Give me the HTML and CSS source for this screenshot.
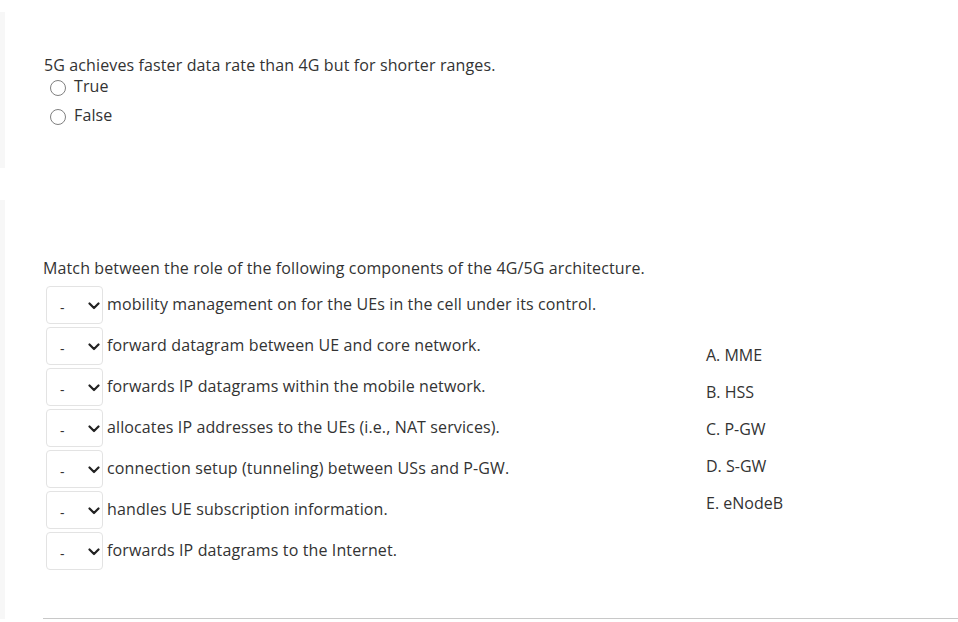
FILE: index.html
```html
<!DOCTYPE html>
<html lang="en">
<head>
<meta charset="utf-8">
<title>Quiz</title>
<link rel="stylesheet" href="styles.css">
</head>
<body>
<div class="page">
  <section class="card card-tf">
    <p class="question">5G achieves faster data rate than 4G but for shorter ranges.</p>
    <label class="option"><span class="radio"></span><span class="opt-text">True</span></label>
    <label class="option"><span class="radio"></span><span class="opt-text">False</span></label>
  </section>

  <section class="card card-match">
    <p class="question">Match between the role of the following components of the 4G/5G architecture.</p>
    <div class="match">
      <div class="rows">
        <div class="row"><div class="select"><span class="dash">-</span><svg class="chev" viewBox="0 0 12 8"><path d="M1.5 1.5 L6 6 L10.5 1.5" /></svg></div><span class="row-text">mobility management on for the UEs in the cell under its control.</span></div>
        <div class="row"><div class="select"><span class="dash">-</span><svg class="chev" viewBox="0 0 12 8"><path d="M1.5 1.5 L6 6 L10.5 1.5" /></svg></div><span class="row-text">forward datagram between UE and core network.</span></div>
        <div class="row"><div class="select"><span class="dash">-</span><svg class="chev" viewBox="0 0 12 8"><path d="M1.5 1.5 L6 6 L10.5 1.5" /></svg></div><span class="row-text">forwards IP datagrams within the mobile network.</span></div>
        <div class="row"><div class="select"><span class="dash">-</span><svg class="chev" viewBox="0 0 12 8"><path d="M1.5 1.5 L6 6 L10.5 1.5" /></svg></div><span class="row-text">allocates IP addresses to the UEs (i.e., NAT services).</span></div>
        <div class="row"><div class="select"><span class="dash">-</span><svg class="chev" viewBox="0 0 12 8"><path d="M1.5 1.5 L6 6 L10.5 1.5" /></svg></div><span class="row-text">connection setup (tunneling) between USs and P-GW.</span></div>
        <div class="row"><div class="select"><span class="dash">-</span><svg class="chev" viewBox="0 0 12 8"><path d="M1.5 1.5 L6 6 L10.5 1.5" /></svg></div><span class="row-text">handles UE subscription information.</span></div>
        <div class="row"><div class="select"><span class="dash">-</span><svg class="chev" viewBox="0 0 12 8"><path d="M1.5 1.5 L6 6 L10.5 1.5" /></svg></div><span class="row-text">forwards IP datagrams to the Internet.</span></div>
      </div>
      <ul class="answers">
        <li>A. MME</li>
        <li>B. HSS</li>
        <li>C. P-GW</li>
        <li>D. S-GW</li>
        <li>E. eNodeB</li>
      </ul>
    </div>
    <hr class="divider">
  </section>
</div>
</body>
</html>
```

FILE: styles.css
```css
html, body {
  margin: 0;
  padding: 0;
  background: #ffffff;
}

body {
  font-family: "Open Sans", "Liberation Sans", sans-serif;
  font-size: 16px;
  letter-spacing: 0.12px;
  color: #333333;
  width: 958px;
  height: 622px;
  overflow: hidden;
}

.page {
  display: flex;
  flex-direction: column;
  padding-top: 12px;
}

.card {
  border-left: 5px solid #f7f7f7;
  border-radius: 0 6px 6px 0;
}

.card-tf {
  height: 156px;
  box-sizing: border-box;
  padding: 42px 0 0 39px;
}

.card-match {
  margin-top: 32px;
  padding: 57px 0 0 38px;
}

.question {
  margin: 0;
  line-height: 22px;
}

.option {
  display: flex;
  align-items: center;
  height: 29px;
  margin-left: 6px;
}

.option:first-of-type {
  margin-top: -5px;
}

.radio {
  width: 14px;
  height: 14px;
  border: 1px solid #808080;
  border-radius: 50%;
  margin-top: 5px;
}

.opt-text {
  margin-left: 8px;
}

.match {
  display: flex;
  margin-top: 7px;
}

.rows {
  display: flex;
  flex-direction: column;
  gap: 3px;
  width: 663px;
}

.row {
  display: flex;
  align-items: center;
  height: 38px;
  padding-left: 3px;
}

.select {
  box-sizing: border-box;
  width: 57px;
  height: 38px;
  border: 1px solid #e3e3e3;
  border-radius: 4px;
  display: flex;
  align-items: center;
  padding-left: 13px;
}

.dash {
  font-size: 14px;
  color: #333;
  margin-top: 4px;
}

.chev {
  width: 12px;
  height: 8px;
  margin-left: 23px;
  margin-top: 2px;
}

.chev path {
  fill: none;
  stroke: #222;
  stroke-width: 2.2;
  stroke-linecap: round;
  stroke-linejoin: round;
}

.row-text {
  margin-left: 4px;
  margin-bottom: 3px;
}

.answers {
  list-style: none;
  margin: 0;
  padding: 58px 0 0 0;
  display: flex;
  flex-direction: column;
  gap: 15px;
  font-size: 16px;
  letter-spacing: 0;
  line-height: 22px;
}

.divider {
  margin: 48px 0 0 0;
  border: none;
  border-top: 1px solid #c8c8c8;
  height: 0;
}
```
